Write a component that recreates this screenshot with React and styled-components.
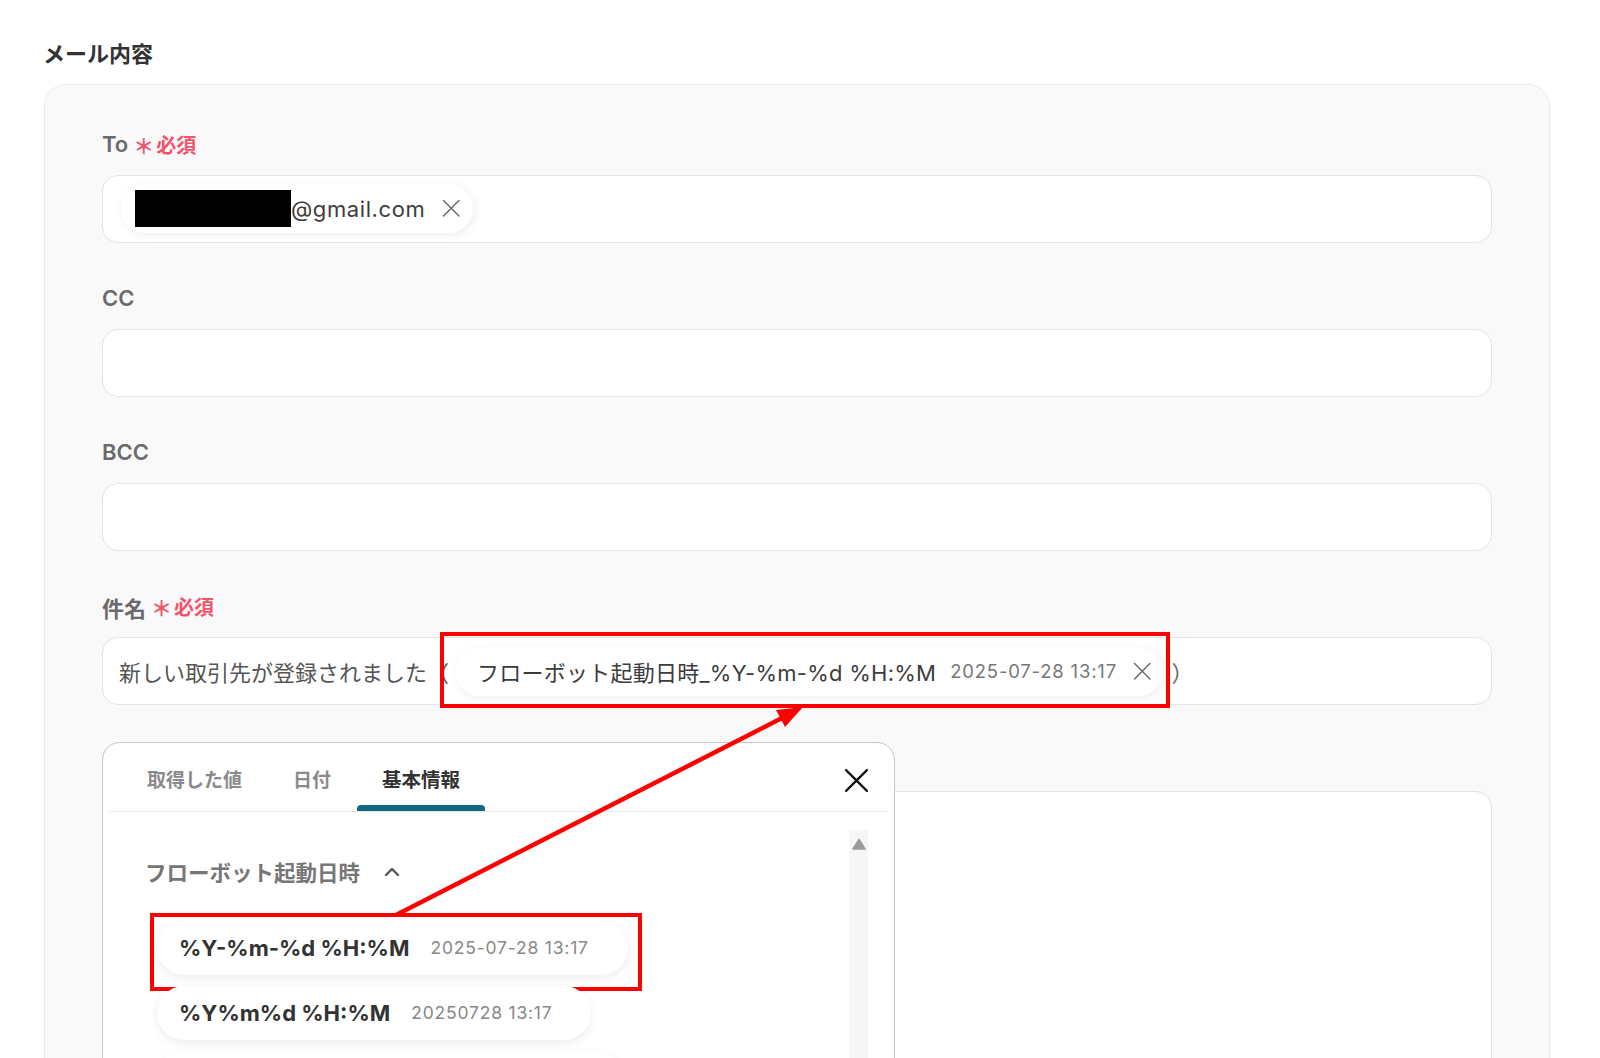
import React from 'react'
import styled, { createGlobalStyle } from 'styled-components'

const GlobalStyle = createGlobalStyle`
  html, body {
    margin: 0;
    padding: 0;
    background: #ffffff;
    height: 1058px;
    overflow: hidden;
  }
  body {
    font-family: Inter, "Noto Sans CJK JP", "Noto Sans", sans-serif;
    color: #333;
  }
  * { box-sizing: border-box; }
`

const Page = styled.div`
  position: relative;
  height: 1058px;
  overflow: hidden;
  padding: 40px 50px 0 44px;
`

const Title = styled.h2`
  margin: 0 0 16px -1px;
  font-size: 22px;
  line-height: 28px;
  font-weight: 700;
  color: #333;
`

const Panel = styled.div`
  background: #f9f9fa;
  border: 1px solid #ececef;
  border-radius: 22px;
  padding: 47px 57px 0 57px;
  height: 1100px;
`

const Field = styled.div`
  position: relative;
  margin-bottom: 43.6px;
`

const Label = styled.div`
  display: flex;
  align-items: center;
  gap: 5px;
  height: 24px;
  margin-bottom: 18.6px;
  font-size: 22px;
  font-weight: 600;
  color: #6a6a6a;
`

const Required = styled.span`
  display: inline-flex;
  align-items: center;
  gap: 2px;
  color: #f2546b;
  font-size: 20px;
  font-weight: 700;
`

const Star = styled.span`
  font-size: 21px;
  font-weight: 700;
  line-height: 1;
  transform: translateY(2px);
`

const InputBox = styled.div`
  display: flex;
  align-items: center;
  height: 68px;
  padding: 0 16px 0 16px;
  background: #fff;
  border: 1px solid #e1e4ea;
  border-radius: 16px;
  font-size: 22px;
  color: #555;
  white-space: nowrap;
`

const Chip = styled.span`
  position: relative;
  display: inline-flex;
  align-items: center;
  height: 49px;
  padding: 0 12px 0 ${p => p.$pad || 22}px;
  margin-left: ${p => p.$gap || 0}px;
  background: #fff;
  border-radius: 25px;
  box-shadow: 2px 2px 10px rgba(0, 0, 0, 0.07);
  font-size: 22px;
  color: #444;

  ${p => p.$marked && `
    &::after {
      content: '';
      position: absolute;
      top: -15px;
      left: -15px;
      right: -7px;
      bottom: -12px;
      border: 4px solid #ff0000;
      pointer-events: none;
    }
  `}
`

const Masked = styled.span`
  display: inline-block;
  width: 156px;
  height: 37px;
  background: #000;
`

const ChipText = styled.span`
  color: #3c3c3c;
  letter-spacing: ${p => p.$spacing || 0.25}px;
`

const ChipValue = styled.span`
  margin-left: 14px;
  font-size: 18.5px;
  letter-spacing: 0.8px;
  color: #777;
`

const RemoveIcon = styled.svg`
  width: 18.5px;
  height: 18.5px;
  margin-left: ${p => p.$gap || 16}px;
  flex-shrink: 0;
`

const Closing = styled.span`
  margin-left: 8px;
  color: #666;
`

const TextArea = styled.div`
  height: 320px;
  background: #fff;
  border: 1px solid #e1e4ea;
  border-radius: 16px;
`

const Popup = styled.div`
  position: absolute;
  top: -7px;
  left: 0;
  width: 793px;
  height: 340px;
  background: #fff;
  border: 1.5px solid #c6c6c6;
  border-radius: 18px;
  z-index: 2;
`

const TabBar = styled.div`
  display: flex;
  align-items: stretch;
  height: 69px;
  margin: 0 6px;
  padding-left: 13px;
  border-bottom: 1px solid #e9e9e9;
`

const Tab = styled.div`
  position: relative;
  display: flex;
  align-items: center;
  padding: 4px 25px 0;
  margin-right: 1px;
  font-size: ${p => (p.$active ? 19.5 : 19)}px;
  font-weight: ${p => (p.$active ? 700 : 600)};
  color: ${p => (p.$active ? '#333' : '#8a8a8a')};

  ${p => p.$active && `
    &::after {
      content: '';
      position: absolute;
      left: 0;
      right: 0;
      bottom: 0;
      height: 6px;
      border-radius: 4px 4px 0 0;
      background: #0f6a80;
    }
  `}
`

const CloseButton = styled.svg`
  position: absolute;
  top: 25px;
  right: 25px;
  width: 25px;
  height: 25px;
`

const PopupBody = styled.div`
  display: flex;
`

const PopupContent = styled.div`
  flex: 1;
  padding: 46px 0 0 42px;
`

const Scroll = styled.div`
  width: 19px;
  height: 240px;
  margin: 18px 26px 0 0;
  background: #f6f6f6;
  display: flex;
  justify-content: center;
  padding-top: 8px;
`

const Section = styled.div`
  display: flex;
  align-items: center;
  gap: 24px;
  height: 28px;
  font-size: 21.5px;
  font-weight: 600;
  color: #767676;
`

const Items = styled.div`
  display: flex;
  flex-direction: column;
  align-items: flex-start;
  gap: 11px;
  margin: 35px 0 0 12px;
`

const Item = styled.div`
  position: relative;
  display: inline-flex;
  align-items: center;
  gap: 21px;
  height: 54px;
  padding: 0 39px 0 22px;
  background: #fff;
  border-radius: 27px;
  box-shadow: 0 3px 10px rgba(0, 0, 0, 0.08);

  ${p => p.$marked && `
    &::after {
      content: '';
      position: absolute;
      top: -7.5px;
      left: -7px;
      right: -14.5px;
      bottom: -16.5px;
      border: 4px solid #ff0000;
      pointer-events: none;
    }
  `}
`

const ItemFormat = styled.span`
  font-size: 22px;
  font-weight: 700;
  color: #333;
`

const ItemValue = styled.span`
  font-size: 17.5px;
  letter-spacing: 0.8px;
  color: #888;
`

const Arrow = styled.svg`
  position: absolute;
  left: 0;
  top: 0;
  width: 1600px;
  height: 1058px;
  pointer-events: none;
  z-index: 10;
`

const XIcon = ({ as: Comp = RemoveIcon, color = '#666', width = 1.8, ...rest }) => (
  <Comp viewBox="0 0 24 24" fill="none" stroke={color} strokeWidth={width} strokeLinecap="round" {...rest}>
    <path d="M2 2L22 22M22 2L2 22" />
  </Comp>
)

const items = [
  { format: '%Y-%m-%d %H:%M', value: '2025-07-28 13:17', marked: true },
  { format: '%Y%m%d %H:%M', value: '20250728 13:17' },
  { format: '%Y/%m/%d %H:%M', value: '2025/07/28 13:17' },
]

const RequiredMark = () => (
  <Required>
    <Star>＊</Star>必須
  </Required>
)

export default function App() {
  return (
    <>
      <GlobalStyle />
      <Page>
        <Title>メール内容</Title>
        <Panel>
          <Field>
            <Label>To<RequiredMark /></Label>
            <InputBox>
              <Chip $pad={14} $gap={2}>
                <Masked />
                <ChipText $spacing={0.6}>@gmail.com</ChipText>
                <XIcon $gap={17} />
              </Chip>
            </InputBox>
          </Field>

          <Field>
            <Label>CC</Label>
            <InputBox />
          </Field>

          <Field>
            <Label>BCC</Label>
            <InputBox />
          </Field>

          <Field>
            <Label>件名<RequiredMark /></Label>
            <InputBox>
              新しい取引先が登録されました（
              <Chip $marked $gap={6}>
                <ChipText>フローボット起動日時_%Y-%m-%d %H:%M</ChipText>
                <ChipValue>2025-07-28 13:17</ChipValue>
                <XIcon />
              </Chip>
              <Closing>）</Closing>
            </InputBox>
          </Field>

          <Field>
            <Label>本文</Label>
            <TextArea />
            <Popup>
              <TabBar>
                <Tab>取得した値</Tab>
                <Tab>日付</Tab>
                <Tab $active>基本情報</Tab>
              </TabBar>
              <XIcon as={CloseButton} color="#111" width={2.2} />
              <PopupBody>
                <PopupContent>
                  <Section>
                    フローボット起動日時
                    <svg width="16" height="12" viewBox="0 0 16 12" fill="none" stroke="#555" strokeWidth="2.4" strokeLinecap="round" strokeLinejoin="round">
                      <path d="M2 9L8 3L14 9" />
                    </svg>
                  </Section>
                  <Items>
                    {items.map(it => (
                      <Item key={it.format} $marked={it.marked}>
                        <ItemFormat>{it.format}</ItemFormat>
                        <ItemValue>{it.value}</ItemValue>
                      </Item>
                    ))}
                  </Items>
                </PopupContent>
                <Scroll>
                  <svg width="14" height="12" viewBox="0 0 14 12">
                    <path d="M7 1.5L13 11H1Z" fill="#9a9a9a" stroke="#9a9a9a" strokeWidth="1.5" strokeLinejoin="round" />
                  </svg>
                </Scroll>
              </PopupBody>
            </Popup>
          </Field>
        </Panel>

        <Arrow viewBox="0 0 1600 1058">
          <line x1="396" y1="915" x2="782" y2="718" stroke="#ff0000" strokeWidth="4.5" />
          <polygon points="803,707 785,727 776,710" fill="#ff0000" />
        </Arrow>
      </Page>
    </>
  )
}
